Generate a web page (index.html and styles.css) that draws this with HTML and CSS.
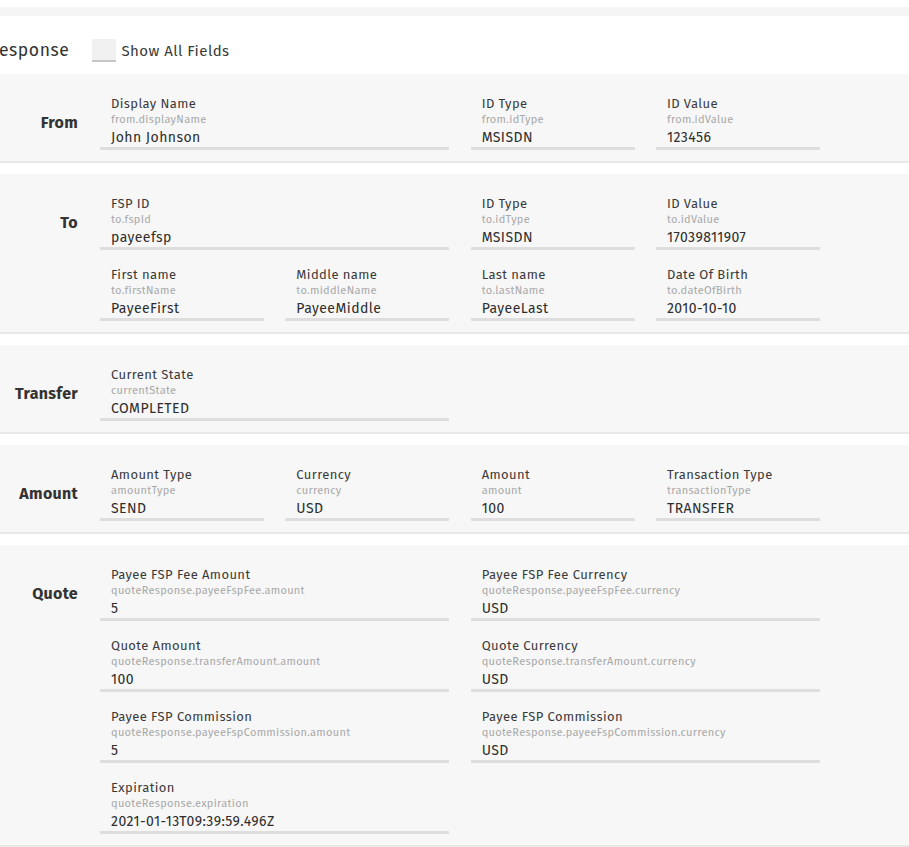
FILE: index.html
```html
<!DOCTYPE html>
<html>
<head>
<meta charset="utf-8">
<link rel="stylesheet" href="styles.css">
</head>
<body>
<div class="topband"></div>
<div class="header">
  <div class="title">Response</div>
  <div class="checkbox"></div>
  <div class="cblabel">Show All Fields</div>
</div>

<section class="panel">
  <div class="plabel">From</div>
  <div class="grid">
    <div class="field span2"><div class="lbl">Display Name</div><div class="sub">from.displayName</div><div class="val">John Johnson</div></div>
    <div class="field"><div class="lbl">ID Type</div><div class="sub">from.idType</div><div class="val">MSISDN</div></div>
    <div class="field"><div class="lbl">ID Value</div><div class="sub">from.idValue</div><div class="val">123456</div></div>
  </div>
</section>

<section class="panel">
  <div class="plabel">To</div>
  <div class="grid">
    <div class="field span2"><div class="lbl">FSP ID</div><div class="sub">to.fspId</div><div class="val">payeefsp</div></div>
    <div class="field"><div class="lbl">ID Type</div><div class="sub">to.idType</div><div class="val">MSISDN</div></div>
    <div class="field"><div class="lbl">ID Value</div><div class="sub">to.idValue</div><div class="val">17039811907</div></div>
    <div class="field"><div class="lbl">First name</div><div class="sub">to.firstName</div><div class="val">PayeeFirst</div></div>
    <div class="field"><div class="lbl">Middle name</div><div class="sub">to.middleName</div><div class="val">PayeeMiddle</div></div>
    <div class="field"><div class="lbl">Last name</div><div class="sub">to.lastName</div><div class="val">PayeeLast</div></div>
    <div class="field"><div class="lbl">Date Of Birth</div><div class="sub">to.dateOfBirth</div><div class="val">2010-10-10</div></div>
  </div>
</section>

<section class="panel">
  <div class="plabel">Transfer</div>
  <div class="grid">
    <div class="field span2"><div class="lbl">Current State</div><div class="sub">currentState</div><div class="val">COMPLETED</div></div>
  </div>
</section>

<section class="panel">
  <div class="plabel">Amount</div>
  <div class="grid">
    <div class="field"><div class="lbl">Amount Type</div><div class="sub">amountType</div><div class="val">SEND</div></div>
    <div class="field"><div class="lbl">Currency</div><div class="sub">currency</div><div class="val">USD</div></div>
    <div class="field"><div class="lbl">Amount</div><div class="sub">amount</div><div class="val">100</div></div>
    <div class="field"><div class="lbl">Transaction Type</div><div class="sub">transactionType</div><div class="val">TRANSFER</div></div>
  </div>
</section>

<section class="panel">
  <div class="plabel">Quote</div>
  <div class="grid">
    <div class="field span2"><div class="lbl">Payee FSP Fee Amount</div><div class="sub">quoteResponse.payeeFspFee.amount</div><div class="val">5</div></div>
    <div class="field span2"><div class="lbl">Payee FSP Fee Currency</div><div class="sub">quoteResponse.payeeFspFee.currency</div><div class="val">USD</div></div>
    <div class="field span2"><div class="lbl">Quote Amount</div><div class="sub">quoteResponse.transferAmount.amount</div><div class="val">100</div></div>
    <div class="field span2"><div class="lbl">Quote Currency</div><div class="sub">quoteResponse.transferAmount.currency</div><div class="val">USD</div></div>
    <div class="field span2"><div class="lbl">Payee FSP Commission</div><div class="sub">quoteResponse.payeeFspCommission.amount</div><div class="val">5</div></div>
    <div class="field span2"><div class="lbl">Payee FSP Commission</div><div class="sub">quoteResponse.payeeFspCommission.currency</div><div class="val">USD</div></div>
    <div class="field span2"><div class="lbl">Expiration</div><div class="sub">quoteResponse.expiration</div><div class="val">2021-01-13T09:39:59.496Z</div></div>
  </div>
</section>
</body>
</html>
```

FILE: styles.css
```css
html, body {
  margin: 0;
  padding: 0;
  background: #ffffff;
  font-family: "Fira Sans", "Open Sans", "Noto Sans", sans-serif;
  color: #333333;
  overflow: hidden;
}

.topband {
  height: 9px;
  margin-top: 7px;
  background: #f5f5f5;
}

.header {
  display: flex;
  align-items: center;
  height: 23px;
  margin: 23px 0 12px -12px;
}

.title {
  font-size: 17.5px;
  color: #333;
  letter-spacing: 0.6px;
}

.checkbox {
  width: 24px;
  height: 21px;
  margin-left: 23px;
  background: #f0f0f0;
  border-bottom: 2px solid #c6c6c6;
}

.cblabel {
  margin-left: 5px;
  font-size: 15px;
  color: #3a3a3a;
  letter-spacing: 0.45px;
}

.panel {
  display: flex;
  align-items: flex-start;
  background: #f7f7f7;
  border-bottom: 2px solid #e8e8e8;
  margin-bottom: 11px;
  padding: 21px 0 11px 0;
}

.plabel {
  flex: none;
  width: 78px;
  margin-right: 22px;
  height: 55px;
  line-height: 56px;
  text-align: right;
  font-weight: 700;
  font-size: 16px;
  letter-spacing: 0.3px;
  color: #333;
}

.grid {
  display: grid;
  grid-template-columns: repeat(4, 164px);
  column-gap: 21.33px;
  row-gap: 16px;
}

.field {
  display: flex;
  flex-direction: column;
  padding: 0 11px;
  border-bottom: 3px solid #dedede;
  height: 52px;
}

.span2 {
  grid-column: span 2;
}

.lbl {
  margin-top: 1px;
  font-size: 13px;
  line-height: 16px;
  color: #3a3a3a;
  letter-spacing: 0.4px;
  white-space: nowrap;
}

.sub {
  margin-top: 1px;
  font-size: 11px;
  line-height: 13px;
  color: #a8a8a8;
  letter-spacing: 0.3px;
  white-space: nowrap;
}

.val {
  margin-top: 3px;
  font-size: 14px;
  line-height: 18px;
  color: #2d2d2d;
  letter-spacing: 0.45px;
  white-space: nowrap;
}
```
